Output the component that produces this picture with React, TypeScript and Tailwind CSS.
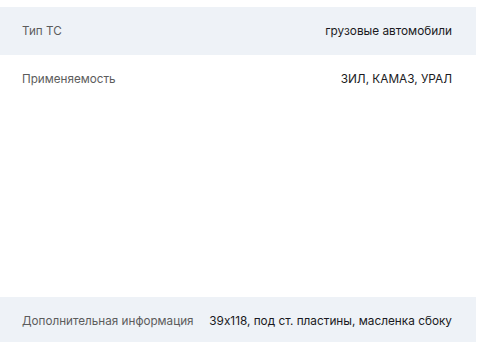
import React from 'react';

const rows = [
  { label: 'Тип ТС', value: 'грузовые автомобили', shade: true, h: 'h-[48px]' },
  { label: 'Применяемость', value: 'ЗИЛ, КАМАЗ, УРАЛ', shade: false, h: 'h-[242px]' },
  { label: 'Дополнительная информация', value: '39x118, под ст. пластины, масленка сбоку', shade: true, h: 'h-[45px]' },
];

export default function App() {
  return (
    <div className="w-[486px] h-[354px] bg-white pt-[7px] font-['Inter','Liberation_Sans',sans-serif] [font-feature-settings:'calt'_0]">
      <div className="w-[476px] flex flex-col">
        {rows.map((r) => (
          <div
            key={r.label}
            className={`${r.h} flex items-start justify-between gap-3 pl-[22px] pr-[24px] pt-[17px] ${r.shade ? 'bg-[#eef2f7]' : 'bg-white'}`}
          >
            <span className="text-[11.7px] leading-[15px] text-[#5c5c5c] whitespace-nowrap">{r.label}</span>
            <span className="text-[11.8px] leading-[15px] text-[#1a1a22] font-normal whitespace-nowrap text-right">{r.value}</span>
          </div>
        ))}
      </div>
    </div>
  );
}
